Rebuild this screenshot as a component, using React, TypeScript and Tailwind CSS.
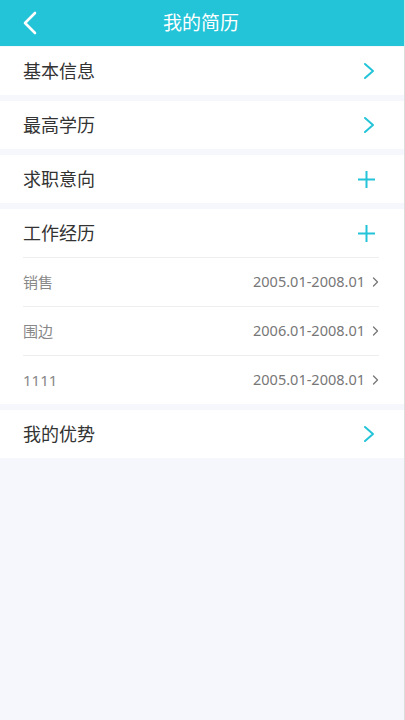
import React from "react";

const font = { fontFamily: '"Noto Sans", "Noto Sans CJK SC", sans-serif' };

function Chevron() {
  return (
    <svg width="14" height="18" viewBox="0 0 14 18" fill="none">
      <path d="M3 2 L11 9 L3 16" stroke="#23c4d8" strokeWidth="2" strokeLinecap="round" strokeLinejoin="round" />
    </svg>
  );
}

function Plus() {
  return (
    <svg width="19" height="19" viewBox="0 0 19 19" fill="none">
      <path d="M9.5 1 V18 M1 9.5 H18" stroke="#23c4d8" strokeWidth="2" />
    </svg>
  );
}

function SmallChevron() {
  return (
    <svg width="7" height="10" viewBox="0 0 7 10" fill="none">
      <path d="M1.5 1 L5.5 5 L1.5 9" stroke="#777" strokeWidth="1.3" strokeLinecap="round" strokeLinejoin="round" />
    </svg>
  );
}

function Row({ label, icon }: { label: string; icon: React.ReactNode }) {
  return (
    <div className="flex h-[48px] items-center justify-between bg-white pl-[23px] pr-[28px]">
      <span className="text-[18px] text-[#333]">{label}</span>
      {icon}
    </div>
  );
}

const jobs = [
  { name: "销售", date: "2005.01-2008.01" },
  { name: "围边", date: "2006.01-2008.01" },
  { name: "1111", date: "2005.01-2008.01" },
];

export default function App() {
  return (
    <div className="min-h-[720px] w-full border-r border-[#dcdcdc] bg-[#f6f7fc]" style={font}>
      <div className="relative flex h-[46px] items-center justify-center bg-[#23c4d8]">
        <svg className="absolute left-[22px] top-[11px]" width="16" height="24" viewBox="0 0 16 24" fill="none">
          <path d="M13 2 L3 12 L13 22" stroke="#fff" strokeWidth="2.6" strokeLinecap="round" strokeLinejoin="round" />
        </svg>
        <span className="pr-[2px] text-[19px] text-white">我的简历</span>
      </div>
      <div className="mt-[1px] flex flex-col gap-[6px]">
        <Row label="基本信息" icon={<Chevron />} />
        <Row label="最高学历" icon={<Chevron />} />
        <Row label="求职意向" icon={<Plus />} />
        <div className="bg-white">
          <div className="flex h-[48px] items-center justify-between pl-[23px] pr-[28px]">
            <span className="text-[18px] text-[#333]">工作经历</span>
            <Plus />
          </div>
          <div className="ml-[23px] mr-[25px]">
            {jobs.map((j, i) => (
              <div key={i} className="flex h-[49px] items-center justify-between border-t border-[#eeeeee]">
                <span className="text-[15px] text-[#888]">{j.name}</span>
                <span className="flex items-center gap-[7px] text-[14.5px] text-[#777]">
                  {j.date}
                  <SmallChevron />
                </span>
              </div>
            ))}
          </div>
        </div>
        <Row label="我的优势" icon={<Chevron />} />
      </div>
    </div>
  );
}
